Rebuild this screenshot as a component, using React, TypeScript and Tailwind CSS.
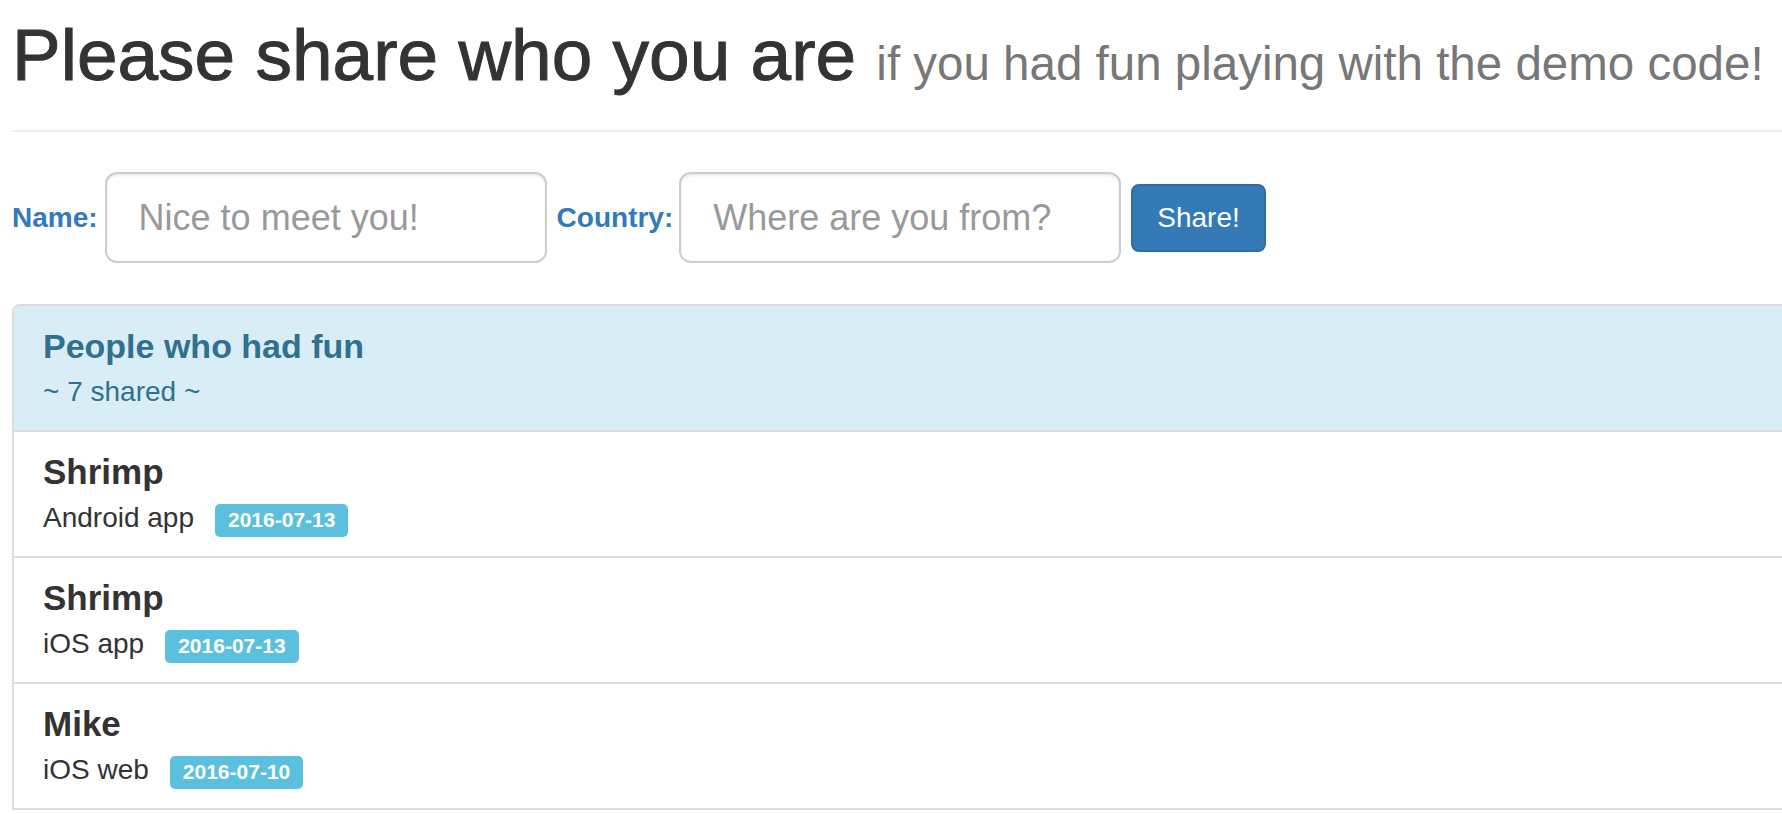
import React from 'react';

const people = [
  { name: 'Shrimp', via: 'Android app', date: '2016-07-13' },
  { name: 'Shrimp', via: 'iOS app', date: '2016-07-13' },
  { name: 'Mike', via: 'iOS web', date: '2016-07-10' },
];

const App = () => {
  return (
    <div className="w-screen h-screen overflow-hidden bg-white pl-[12px] pt-[15px] font-['Liberation_Sans',Arial,sans-serif] text-[#333]">
      {/* Page header */}
      <div className="border-b-2 border-[#eee] pb-[35px] w-[1800px]">
        <h1 className="h-[80px] text-[73px] leading-[80px] whitespace-nowrap text-[#333] [-webkit-text-stroke:1px_#333]">
          Please share who you are{' '}
          <small className="text-[47.5px] leading-none text-[#777] [-webkit-text-stroke:0px]">if you had fun playing with the demo code!</small>
        </h1>
      </div>

      {/* Share form */}
      <form className="mt-[40px] flex items-center h-[91px]" onSubmit={(e) => e.preventDefault()}>
        <label className="text-[28px] leading-[40px] font-bold text-[#337ab7] mr-[7px]">Name:</label>
        <input
          className="w-[442px] h-[91px] border-2 border-[#ccc] rounded-[12px] px-[32px] text-[36px] text-[#555] placeholder:text-[#999] shadow-[inset_0_2px_2px_rgba(0,0,0,0.075)] outline-none mr-[10px]"
          placeholder="Nice to meet you!"
        />
        <label className="text-[28px] leading-[40px] font-bold text-[#337ab7] mr-[6px]">Country:</label>
        <input
          className="w-[442px] h-[91px] border-2 border-[#ccc] rounded-[12px] px-[32px] text-[36px] text-[#555] placeholder:text-[#999] shadow-[inset_0_2px_2px_rgba(0,0,0,0.075)] outline-none mr-[10px]"
          placeholder="Where are you from?"
        />
        <button
          type="submit"
          className="h-[68px] px-[24px] bg-[#337ab7] border-2 border-[#2e6da4] rounded-[8px] text-white text-[28px] leading-[40px]"
        >
          Share!
        </button>
      </form>

      {/* Panel */}
      <div className="mt-[41px] w-[1800px] border-2 border-[#ddd] rounded-t-[8px] overflow-hidden">
        <div className="h-[124px] bg-[#d9edf7] px-[29px] pt-[20px] text-[#31708f]">
          <h3 className="text-[34px] leading-[40px] font-bold mb-[8px]">People who had fun</h3>
          <div className="text-[28px] leading-[36px]">~ 7 shared ~</div>
        </div>
        {people.map((p, i) => (
          <div key={i} className="h-[126px] border-t-2 border-[#ddd] px-[29px] pt-[20px]">
            <h4 className="text-[35px] leading-[40px] font-bold mb-[8px] text-[#333]">{p.name}</h4>
            <p className="text-[28px] leading-[36px] text-[#333]">
              {p.via}
              <span className="inline-block ml-[21px] bg-[#5bc0de] text-white text-[21px] font-bold leading-[21px] pt-[5px] pb-[7px] px-[13px] rounded-[5px]">
                {p.date}
              </span>
            </p>
          </div>
        ))}
      </div>
    </div>
  );
};

export default App;
